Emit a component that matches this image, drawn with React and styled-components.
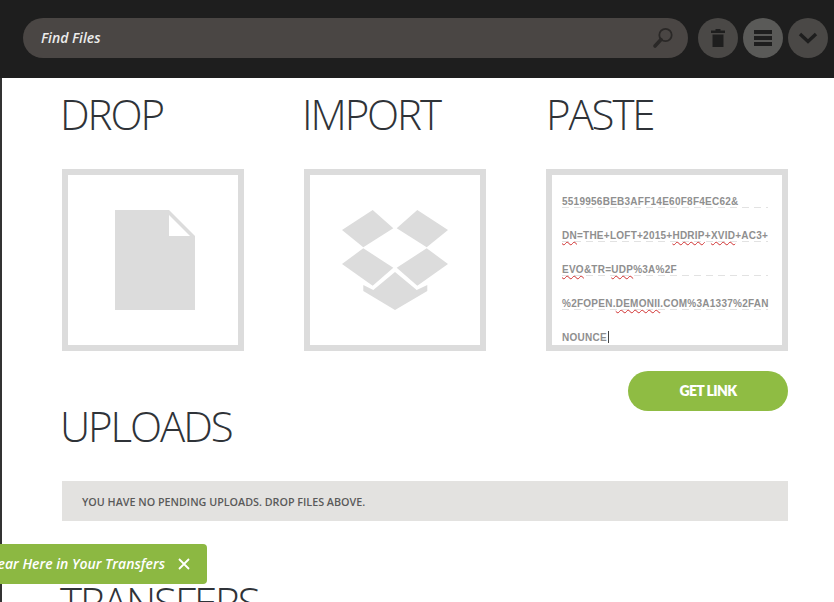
import React from "react";
import styled, { createGlobalStyle } from "styled-components";

const Global = createGlobalStyle`
  html, body { margin: 0; padding: 0; height: 100%; overflow: hidden; background: #1e1e1e; }
  #root { height: 100%; }
  * { box-sizing: border-box; }
`;

const Page = styled.div`
  position: relative;
  height: 602px;
  overflow: hidden;
  background: #333;
`;
const TopBar = styled.header`
  height: 78px;
  display: flex;
  align-items: center;
  padding: 0 6px 2px 23px;
  gap: 5px;
  background: #1e1e1e;
`;
const SearchPill = styled.div`
  flex: 1;
  height: 40px;
  margin-right: 5px;
  border-radius: 20px;
  background: #4a4644;
  display: flex;
  align-items: center;
  justify-content: space-between;
  padding: 0 14px 0 18px;
`;
const SearchLabel = styled.span`
  font: italic 600 14px "Open Sans", sans-serif;
  color: #ececec;
  padding-bottom: 2px;
`;
const RoundButton = styled.button`
  width: 40px;
  height: 40px;
  padding: 0;
  border: 0;
  border-radius: 50%;
  background: ${(p) => (p.$active ? "#5a5a58" : "#4a4846")};
  display: flex;
  align-items: center;
  justify-content: center;
`;
const Main = styled.main`
  margin-left: 2px;
  height: 524px;
  background: #fff;
  padding: 0 46px 0 60px;
`;
const Columns = styled.section`
  display: grid;
  grid-template-columns: 182px 182px 242px;
  column-gap: 60px;
`;
const Column = styled.div`
  display: flex;
  flex-direction: column;
`;
const Heading = styled.h2`
  margin: 0 0 0 ${(p) => p.$shift || 0}px;
  font: 300 42px/72px "Open Sans", sans-serif;
  letter-spacing: -2.1px;
  color: #2f3338;
  height: 91px;
  white-space: nowrap;
`;
const Tile = styled.div`
  height: 182px;
  border: 6px solid #dcdcdc;
  background: #fff;
  display: flex;
  align-items: center;
  justify-content: center;
`;
const FileIcon = styled.svg`
  margin-left: 4px;
`;
const PasteTile = styled.div`
  height: 182px;
  border: 6px solid #dcdcdc;
  background: #fff;
  padding: 19px 14px 0 10px;
  overflow: hidden;
`;
const PasteLine = styled.div`
  height: 14px;
  margin-bottom: 20px;
  padding-top: 1px;
  background: ${(p) =>
    p.$plain
      ? "none"
      : "repeating-linear-gradient(90deg, #e2e2e2 0 7px, transparent 7px 12px) left bottom / 100% 1px no-repeat"};
  font: bold 10px/14px "Liberation Sans", sans-serif;
  letter-spacing: 0.25px;
  color: #8f8f8f;
  white-space: nowrap;
`;
const Misspelt = styled.span`
  text-decoration: underline wavy #d03030 1px;
  text-underline-offset: 2px;
`;
const Caret = styled.span`
  display: inline-block;
  width: 1px;
  height: 12px;
  margin-left: 1px;
  vertical-align: -2px;
  background: #444;
`;
const ActionRow = styled.div`
  display: flex;
  justify-content: flex-end;
  height: 40px;
  margin-top: 20px;
`;
const GetLink = styled.button`
  width: 160px;
  height: 40px;
  border: 0;
  padding: 0 0 2px;
  border-radius: 20px;
  background: #8fbc43;
  color: #fff;
  font: 800 14px "Lato", sans-serif;
  letter-spacing: -0.6px;
`;
const UploadsHeading = styled(Heading)`
  height: 89px;
  margin-top: -19px;
  line-height: 68px;
`;
const Notice = styled.div`
  height: 40px;
  padding: 1px 20px 0;
  display: flex;
  align-items: center;
  background: #e3e2e0;
  font: 600 10.75px "Open Sans", sans-serif;
  color: #5a5a5a;
  text-transform: uppercase;
`;
const TransfersHeading = styled(Heading)`
  margin-top: 45px;
`;
const Toast = styled.div`
  position: absolute;
  right: 627px;
  top: 544px;
  height: 40px;
  display: flex;
  align-items: center;
  gap: 13px;
  padding: 0 17px 0 0;
  background: #8cb842;
  border-radius: 0 4px 4px 0;
  color: #fff;
  font: italic 600 14px "Open Sans", sans-serif;
  white-space: nowrap;
`;
const ToastText = styled.span`
  padding-bottom: 2px;
`;

export default function App() {
  return (
    <Page>
      <Global />
      <TopBar>
        <SearchPill>
          <SearchLabel>Find Files</SearchLabel>
          <svg width="22" height="22" viewBox="0 0 22 22" aria-hidden="true">
            <circle cx="13.5" cy="8" r="6.2" fill="none" stroke="#2a2827" strokeWidth="1.8" />
            <path d="M9 12.6 3 19" stroke="#2a2827" strokeWidth="3.6" strokeLinecap="round" />
          </svg>
        </SearchPill>
        <RoundButton aria-label="Delete">
          <svg width="16" height="20" viewBox="0 0 16 20" aria-hidden="true">
            <path d="M5.5 1h5v1.5H15v2.5H1V2.5h4.5zM2.5 6.5h11V19h-11z" fill="#1e1e1e" />
          </svg>
        </RoundButton>
        <RoundButton $active aria-label="List">
          <svg width="18" height="16" viewBox="0 0 18 16" aria-hidden="true">
            <path d="M0 0h18v4H0zM0 6h18v4H0zM0 12h18v4H0z" fill="#1e1e1e" />
          </svg>
        </RoundButton>
        <RoundButton aria-label="More">
          <svg width="20" height="14" viewBox="0 0 20 14" aria-hidden="true">
            <path d="M2 3l8 7.5L18 3" fill="none" stroke="#1e1e1e" strokeWidth="3.4" />
          </svg>
        </RoundButton>
      </TopBar>
      <Main>
        <Columns>
          <Column>
            <Heading $shift={-2}>DROP</Heading>
            <Tile>
              <FileIcon width="80" height="100" viewBox="0 0 80 100" aria-hidden="true">
                <path d="M0 0h54l26 26v74H0z" fill="#dcdcdc" />
                <path d="M54 5v21h21z" fill="#fff" />
              </FileIcon>
            </Tile>
          </Column>
          <Column>
            <Heading $shift={-2}>IMPORT</Heading>
            <Tile>
              <svg width="106" height="100" viewBox="0 0 106 100" fill="#dcdcdc" aria-hidden="true">
                <path d="M30.7 0 51.3 18.3 21.3 37.3 0 20zM75.3 0 106 20 84.7 37.3 54.7 18.3zM21.3 38.3 51.3 57.7 30.7 75.7 0 54zM84.7 38.3 106 54 75.3 75.7 54.7 57.7zM53 62 74.7 80 85.3 75V81L53 100 21.3 81V75L31.3 80z" />
              </svg>
            </Tile>
          </Column>
          <Column>
            <Heading>PASTE</Heading>
            <PasteTile>
              <PasteLine>5519956BEB3AFF14E60F8F4EC62&amp;</PasteLine>
              <PasteLine>
                <Misspelt>DN</Misspelt>=THE+LOFT+2015+<Misspelt>HDRIP</Misspelt>+<Misspelt>XVID</Misspelt>+AC3+
              </PasteLine>
              <PasteLine>
                <Misspelt>EVO</Misspelt>&amp;TR=<Misspelt>UDP</Misspelt>%3A%2F
              </PasteLine>
              <PasteLine>
                %2FOPEN.<Misspelt>DEMONII</Misspelt>.COM%3A1337%2FAN
              </PasteLine>
              <PasteLine $plain>
                NOUNCE<Caret />
              </PasteLine>
            </PasteTile>
            <ActionRow>
              <GetLink>GET LINK</GetLink>
            </ActionRow>
          </Column>
        </Columns>
        <UploadsHeading $shift={-2}>UPLOADS</UploadsHeading>
        <Notice>You have no pending uploads. Drop files above.</Notice>
        <TransfersHeading $shift={-2}>TRANSFERS</TransfersHeading>
      </Main>
      <Toast>
        <ToastText>Files Will Appear Here in Your Transfers</ToastText>
        <svg width="12" height="12" viewBox="0 0 12 12" aria-hidden="true">
          <path d="M1 1l10 10M11 1 1 11" stroke="#fff" strokeWidth="1.8" />
        </svg>
      </Toast>
    </Page>
  );
}
